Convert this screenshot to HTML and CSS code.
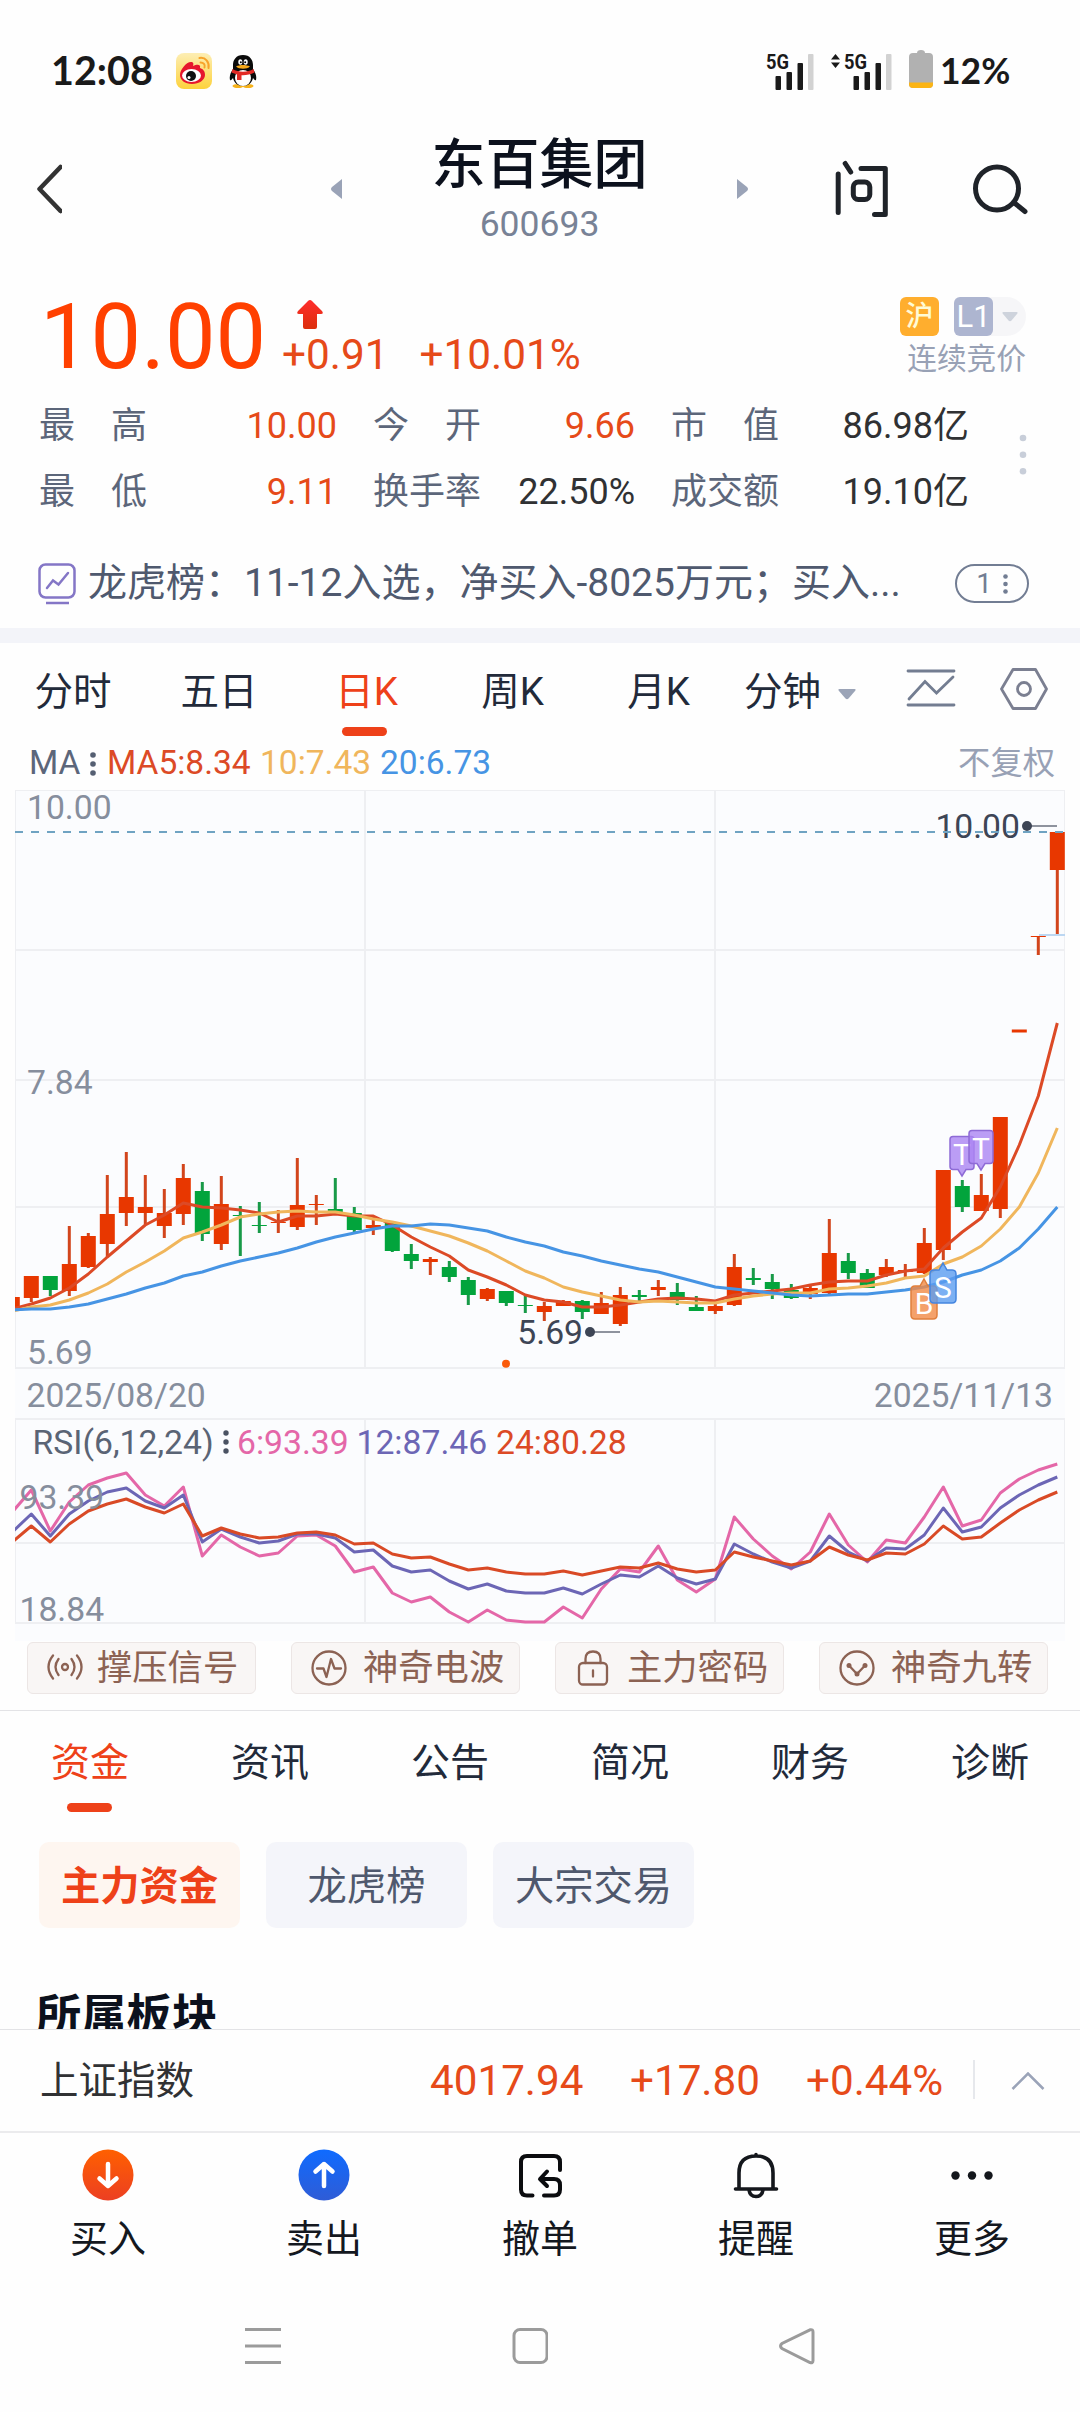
FILE: index.html
```html
<!DOCTYPE html>
<html lang="zh-CN">

<head>
    <meta charset="UTF-8">
    <meta name="viewport" content="width=device-width, initial-scale=1.0">
    <title>东百集团 600693</title>
    <link rel="stylesheet" href="styles.css">
</head>

<body>
    <!-- Status bar -->
    <div class="status-bar">
        <span class="clock">12:08</span>
        <svg class="app-weibo" width="36" height="36" viewBox="0 0 36 36">
            <defs>
                <linearGradient id="weibo-bg" x1="0" y1="0" x2="0" y2="1">
                    <stop offset="0" stop-color="#fdeeb4" />
                    <stop offset="1" stop-color="#fdd23c" />
                </linearGradient>
            </defs>
            <rect width="36" height="36" rx="8" fill="url(#weibo-bg)" />
            <path d="M4 22C4 17 10 9 15 9c2 0 3 1 2 4 4-2 8-2 7 2 3 1 5 3 5 7 0 5-6 9-13 9S4 27 4 22z" fill="#e6162d" />
            <ellipse cx="15.500" cy="22.500" rx="9.500" ry="6.500" fill="#fff" />
            <circle cx="15" cy="23" r="5" fill="#111" />
            <circle cx="13" cy="24.500" r="1.500" fill="#fff" />
            <path d="M23.500 5c6-1 10 4 9 10M24.500 9.500c3 0 5 2 4 5" fill="none" stroke="#f7a32a" stroke-width="2"
                stroke-linecap="round" />
        </svg>
        <svg class="app-qq" width="28" height="34" viewBox="0 0 28 34">
            <ellipse cx="9" cy="32" rx="5.500" ry="2" fill="#f6b21b" />
            <ellipse cx="19" cy="32" rx="5.500" ry="2" fill="#f6b21b" />
            <path d="M14 1C7 1 4 6 4 11v4c-2 3-4 7-3 11 1 1 2-1 3-2 1 5 5 8 10 8s9-3 10-8c1 1 2 3 3 2 1-4-1-8-3-11v-4C24 6 21 1 14 1z" fill="#0a0a0a" />
            <ellipse cx="14" cy="24" rx="8" ry="8" fill="#fff" />
            <ellipse cx="11.300" cy="8" rx="2" ry="2.800" fill="#fff" />
            <ellipse cx="16.700" cy="8" rx="2" ry="2.800" fill="#fff" />
            <circle cx="11.800" cy="8.300" r="1" />
            <circle cx="16.200" cy="8.300" r="1" />
            <path d="M7 12.500c4-2 10-2 14 0-3 3-11 3-14 0z" fill="#f6a81b" />
            <path d="M3.500 15c6 3.500 15 3.500 21 0l1 3.500c-4 2-9 3-13 2.700V26H8v-5.500l-5.500-2z" fill="#e32a25" />
        </svg>
        <svg class="signal" width="49" height="40" viewBox="0 0 49 40">
            <text class="net" x="0" y="17.500" textLength="23" lengthAdjust="spacingAndGlyphs">5G</text>
            <rect x="9.500" y="25" width="5.500" height="14" rx="1" />
            <rect x="20.500" y="21" width="5.500" height="18" rx="1" />
            <rect x="31.500" y="12" width="5.500" height="27" rx="1" />
            <rect x="42" y="3" width="5.500" height="36" rx="1" fill="#d2d2d2" />
        </svg>
        <svg class="signal second" width="63" height="40" viewBox="0 0 63 40">
            <path d="M1 8.500L5.500 3l4.500 5.500zM1 11.500h9L5.500 17z" />
            <text class="net" x="14" y="17.500" textLength="23" lengthAdjust="spacingAndGlyphs">5G</text>
            <rect x="23.500" y="25" width="5.500" height="14" rx="1" />
            <rect x="34.500" y="21" width="5.500" height="18" rx="1" />
            <rect x="45.500" y="12" width="5.500" height="27" rx="1" />
            <rect x="56" y="3" width="5.500" height="36" rx="1" fill="#d2d2d2" />
        </svg>
        <svg class="battery" width="24" height="38" viewBox="0 0 24 38">
            <path d="M8 3q0-3 4-3t4 3h4q4 0 4 4v27q0 4-4 4H4q-4 0-4-4V7q0-4 4-4z" fill="#b1b1b1" />
            <path d="M0 32.500h24V34q0 4-4 4H4q-4 0-4-4z" fill="#fbb414" />
        </svg>
        <span class="battery-text">12%</span>
    </div>

    <!-- Title bar -->
    <header class="header">
        <svg class="back" width="26" height="50" viewBox="0 0 26 50">
            <path d="M24.500 3L3.500 25l21 22" fill="none" stroke="#333" stroke-width="4.500" stroke-linecap="round"
                stroke-linejoin="round" />
        </svg>
        <svg class="prev" width="11" height="20" viewBox="0 0 11 20">
            <path d="M11 0v20L1 12q-2-2 0-4z" fill="#9aa3b7" />
        </svg>
        <div class="stock">
            <h1>东百集团</h1>
            <div class="code">600693</div>
        </div>
        <svg class="next" width="11" height="20" viewBox="0 0 11 20">
            <path d="M0 0v20l10-8q2-2 0-4z" fill="#9aa3b7" />
        </svg>
        <svg class="ask" width="54" height="58" viewBox="0 0 54 58">
            <g fill="none" stroke="#1f2329" stroke-width="5" stroke-linecap="round" stroke-linejoin="round">
                <path d="M3.200 14v38.500M10.200 3.500l5.500 8.500M26 8.500h24.300v46H39.500" />
                <rect x="18.300" y="22" width="16.500" height="17.500" rx="5" />
            </g>
        </svg>
        <svg class="search" width="58" height="58" viewBox="0 0 58 58">
            <g fill="none" stroke="#1f2329" stroke-width="5" stroke-linecap="round">
                <circle cx="26" cy="28.500" r="21.500" />
                <path d="M43.500 43L54 51.500" />
            </g>
        </svg>
    </header>

    <!-- Quote -->
    <section class="quote">
        <div class="price-row">
            <span class="price">10.00</span>
            <div class="change">
                <svg width="28" height="30" viewBox="0 0 28 30">
                    <defs>
                        <linearGradient id="up-arrow" x1="0" y1="0" x2="0" y2="1">
                            <stop offset="0" stop-color="#ff2d2d" />
                            <stop offset="1" stop-color="#dc2f0c" />
                        </linearGradient>
                    </defs>
                    <path d="M14 0q1 0 2 1l10 10q2 3-1 3h-4v13q0 2-2 2H9q-2 0-2-2V14H3q-3 0-1-3L12 1q1-1 2-1z"
                        fill="url(#up-arrow)" />
                </svg>
                <div class="change-values"><span>+0.91</span><span>+10.01%</span></div>
            </div>
            <div class="market">
                <div class="badges">
                    <span class="badge hu">沪</span>
                    <span class="level">
                        <span class="badge l1">L1</span>
                        <svg width="16" height="10" viewBox="0 0 16 10">
                            <path d="M1.500 0h13q2 0 .5 2L9.500 8.500q-1.500 1.500-3 0L1 2Q-.5 0 1.500 0z" fill="#ced3dc" />
                        </svg>
                    </span>
                </div>
                <div class="auction">连续竞价</div>
            </div>
        </div>
        <div class="stats-wrap">
            <div class="stats">
                <span class="label"><i>最</i><i>高</i></span><span class="value up">10.00</span>
                <span class="label"><i>今</i><i>开</i></span><span class="value up">9.66</span>
                <span class="label"><i>市</i><i>值</i></span><span class="value">86.98亿</span>
                <span class="label"><i>最</i><i>低</i></span><span class="value up">9.11</span>
                <span class="label">换手率</span><span class="value">22.50%</span>
                <span class="label">成交额</span><span class="value">19.10亿</span>
            </div>
            <svg class="more-dots" width="8" height="42" viewBox="0 0 8 42" fill="#c8ced9">
                <circle cx="4" cy="4" r="3.300" />
                <circle cx="4" cy="20.700" r="3.300" />
                <circle cx="4" cy="37.300" r="3.300" />
            </svg>
        </div>
        <div class="news">
            <svg width="38" height="42" viewBox="0 0 38 42" fill="none" stroke="#8476c6" stroke-width="2.500">
                <rect x="1.500" y="1.500" width="35" height="33" rx="6" />
                <path d="M9 25l6-7.500 5.500 4L30 10" stroke-linecap="round" />
                <path d="M8 40h23" />
            </svg>
            <span class="news-text">龙虎榜：11-12入选，净买入-8025万元；买入...</span>
            <span class="news-count">1
                <svg width="5" height="20" viewBox="0 0 5 20" fill="#727d93">
                    <circle cx="2.500" cy="2.500" r="2.300" />
                    <circle cx="2.500" cy="10" r="2.300" />
                    <circle cx="2.500" cy="17.500" r="2.300" />
                </svg>
            </span>
        </div>
    </section>

    <!-- Chart period tabs -->
    <nav class="periods">
        <span class="period">分时</span>
        <span class="period">五日</span>
        <span class="period active">日K</span>
        <span class="period">周K</span>
        <span class="period">月K</span>
        <span class="minutes">分钟
            <svg width="18" height="11" viewBox="0 0 18 11">
                <path d="M1.500 0h15q2 0 .5 2l-6.500 7.500q-1.500 1.500-3 0L1 2Q-.5 0 1.500 0z" fill="#9ba4b7" />
            </svg>
        </span>
        <svg class="tool-line" width="50" height="42" viewBox="0 0 50 42" fill="none" stroke="#737d91"
            stroke-width="2.800" stroke-linecap="round">
            <path d="M2 4h46M2 38h46M3 32l16-17.500L30.500 26 47 10" />
        </svg>
        <svg class="tool-hex" width="48" height="42" viewBox="0 0 48 42" fill="none" stroke="#7b7f91"
            stroke-width="2.800" stroke-linejoin="round">
            <path d="M13 1.500h22.500L46.500 21 35.500 40.500H13L1.500 21z" />
            <circle cx="24" cy="21" r="6.500" />
        </svg>
    </nav>
    <div class="ma-row">
        <span class="ma">MA</span>
        <svg width="6" height="24" viewBox="0 0 6 24" fill="#555f72">
            <circle cx="3" cy="3" r="2.800" />
            <circle cx="3" cy="12" r="2.800" />
            <circle cx="3" cy="21" r="2.800" />
        </svg>
        <span class="ma5">MA5:8.34</span>
        <span class="ma10">10:7.43</span>
        <span class="ma20">20:6.73</span>
        <span class="adjust">不复权</span>
    </div>

    <!-- K line and RSI chart -->
    <svg id="chart" class="chart" width="1050" height="851" viewBox="0 0 1050 851">
        <rect width="1050" height="851" fill="#fbfcfe" />
        <g class="grid">
            <path d="M0 .5h1050M.5 0v578M1049.500 0v578" stroke-width="1" />
            <path d="M0 160h1050M0 290h1050M0 417h1050M0 578h1050M350 0v578M700 0v578" />
            <path d="M0 629h1050M0 753h1050M0 833h1050M350 629v204M700 629v204" />
            <path d="M.5 629v204M1049.500 629v204" stroke-width="1" />
        </g>
        <path d="M1024 145h26" stroke="#bcd7f2" stroke-width="2" />
        <g class="axis">
            <text x="12" y="29">10.00</text>
            <text x="12" y="303.500">7.84</text>
            <text x="12" y="573.500">5.69</text>
            <text x="11.500" y="617">2025/08/20</text>
            <text x="1038" y="617" text-anchor="end">2025/11/13</text>
        </g>
        <g class="extreme">
            <text x="1005" y="48" text-anchor="end">10.00</text>
            <text x="568" y="553.500" text-anchor="end">5.69</text>
            <path d="M1012 36h30M575 542h30" stroke="#8e939e" stroke-width="2" />
            <circle cx="1012" cy="36" r="5" />
            <circle cx="575" cy="542" r="5" />
        </g>
        <circle cx="491" cy="573.700" r="4" fill="#fa5a0a" />
        <g id="candles"></g>
        <path d="M0 42h1050" stroke="#6fa3c2" stroke-width="2" stroke-dasharray="8 8" />
        <g id="averages"></g>

        <!-- buy / sell marks -->
        <g class="mark" fill="#ab85f2" stroke="#8e6bd6">
            <path d="M938 346.500h18q3 0 3 3v27q0 3-3 3h-5l-4 6.500-4-6.500h-5q-3 0-3-3v-27q0-3 3-3z" />
            <text x="947" y="375">T</text>
            <path d="M957 340.500h18q3 0 3 3v27q0 3-3 3h-5l-4 6.500-4-6.500h-5q-3 0-3-3v-27q0-3 3-3z" />
            <text x="966" y="369">T</text>
        </g>
        <g class="mark" fill="#f28a45" stroke="#e07f3c">
            <path d="M900 496h5l4-7 4 7h5q4 0 4 4v25q0 4-4 4h-18q-4 0-4-4v-25q0-4 4-4z" />
            <text x="909" y="524">B</text>
        </g>
        <g class="mark" fill="#5b9cf0" stroke="#4485e0">
            <path d="M919 480h5l4-7 4 7h5q4 0 4 4v25q0 4-4 4h-18q-4 0-4-4v-25q0-4 4-4z" />
            <text x="928" y="508">S</text>
        </g>

        <g class="rsi-title">
            <text x="17.500" y="664" fill="#5a6475">RSI(6,12,24)</text>
            <g fill="#4a5262">
                <circle cx="211" cy="643" r="2.700" />
                <circle cx="211" cy="652" r="2.700" />
                <circle cx="211" cy="661" r="2.700" />
            </g>
            <text x="222" y="664" fill="#e467a8">6:93.39</text>
            <text x="341.500" y="664" fill="#6c66b5">12:87.46</text>
            <text x="481" y="664" fill="#dc4a26">24:80.28</text>
        </g>
        <g id="rsi"></g>
        <g class="axis">
            <text x="4.500" y="719">93.39</text>
            <text x="4.500" y="831">18.84</text>
        </g>
    </svg>

    <!-- Signal shortcuts -->
    <div class="signals">
        <div class="signal-btn">
            <svg width="36" height="36" viewBox="0 0 36 36">
                <circle cx="18" cy="17" r="3" />
                <path d="M11.500 9q-6 8 0 16M24.500 9q6 8 0 16M6 5.500q-9 11.500 0 23M30 5.500q9 11.500 0 23" />
            </svg>
            撑压信号
        </div>
        <div class="signal-btn">
            <svg width="36" height="36" viewBox="0 0 36 36">
                <circle cx="18" cy="18" r="16.500" />
                <path d="M6 18.500h6.500l3 8.500 4.500-18 3.500 9.500H30" />
            </svg>
            神奇电波
        </div>
        <div class="signal-btn">
            <svg width="36" height="36" viewBox="0 0 36 36">
                <rect x="4" y="13" width="28" height="21.500" rx="4" />
                <path d="M10.500 13V9q0-7.500 7.500-7.500T25.500 9v4M18 20.500v6" />
            </svg>
            主力密码
        </div>
        <div class="signal-btn">
            <svg width="36" height="36" viewBox="0 0 36 36">
                <circle cx="18" cy="18" r="16.500" />
                <path d="M10 15.500l8 8.500 8-8.500" />
                <g fill="#8c6253" stroke="none">
                    <circle cx="10" cy="15.500" r="2.500" />
                    <circle cx="18" cy="24" r="2.500" />
                    <circle cx="26" cy="15.500" r="2.500" />
                </g>
            </svg>
            神奇九转
        </div>
    </div>

    <!-- Info tabs -->
    <nav class="info-tabs">
        <span class="active">资金</span>
        <span>资讯</span>
        <span>公告</span>
        <span>简况</span>
        <span>财务</span>
        <span>诊断</span>
    </nav>
    <div class="chips">
        <span class="chip active">主力资金</span>
        <span class="chip">龙虎榜</span>
        <span class="chip">大宗交易</span>
    </div>
    <div class="sector">
        <h2>所属板块</h2>
    </div>

    <!-- Index bar -->
    <div class="index-bar">
        <span class="index-name">上证指数</span>
        <span class="index-value">4017.94</span>
        <span class="index-diff">+17.80</span>
        <span class="index-pct">+0.44%</span>
        <span class="index-line"></span>
        <svg width="34" height="20" viewBox="0 0 34 20">
            <path d="M1.500 17L17 1.500 32.500 17" fill="none" stroke="#9aa3b8" stroke-width="2.500" />
        </svg>
    </div>

    <!-- Bottom actions -->
    <footer class="actions">
        <div class="action">
            <svg width="52" height="52" viewBox="0 0 52 52">
                <defs>
                    <linearGradient id="buy-bg" x1="0" y1="0" x2="0" y2="1">
                        <stop offset="0" stop-color="#ff6000" />
                        <stop offset="1" stop-color="#ec3f22" />
                    </linearGradient>
                </defs>
                <circle cx="26" cy="26" r="25.500" fill="url(#buy-bg)" />
                <path d="M26 15v22M17.500 29.500L26 37l8.500-7.500" fill="none" stroke="#fff" stroke-width="4.500"
                    stroke-linecap="round" stroke-linejoin="round" />
            </svg>
            买入
        </div>
        <div class="action">
            <svg width="52" height="52" viewBox="0 0 52 52">
                <defs>
                    <linearGradient id="sell-bg" x1="0" y1="0" x2="0" y2="1">
                        <stop offset="0" stop-color="#0f6bff" />
                        <stop offset="1" stop-color="#2f5cd6" />
                    </linearGradient>
                </defs>
                <circle cx="26" cy="26" r="25.500" fill="url(#sell-bg)" />
                <path d="M26 37V15M17.500 22.500L26 15l8.500 7.500" fill="none" stroke="#fff" stroke-width="4.500"
                    stroke-linecap="round" stroke-linejoin="round" />
            </svg>
            卖出
        </div>
        <div class="action">
            <svg width="52" height="52" viewBox="0 0 52 52">
                <g fill="none" stroke="#0b0c0f" stroke-width="4" stroke-linecap="round" stroke-linejoin="round">
                    <path d="M18.500 46.500H13q-6 0-6-6V13q0-6 6-6h27q6 0 6 6v8" />
                    <path d="M30 46.500h10q6 0 6-6V36q0-6-6-6H27M33 22.500L26 30l7 7" />
                </g>
            </svg>
            撤单
        </div>
        <div class="action">
            <svg width="52" height="52" viewBox="0 0 52 52">
                <g fill="none" stroke="#14171c" stroke-width="3.600" stroke-linecap="round" stroke-linejoin="round">
                    <path d="M5.500 40h41M9 40V24Q9 7 26 7t17 17v16M26 5.500V7M19 41q1 6.500 7 6.500t7-6.500" />
                </g>
            </svg>
            提醒
        </div>
        <div class="action">
            <svg width="52" height="52" viewBox="0 0 52 52" fill="#14171c">
                <circle cx="9.500" cy="26.500" r="4.200" />
                <circle cx="26" cy="26.500" r="4.200" />
                <circle cx="42.500" cy="26.500" r="4.200" />
            </svg>
            更多
        </div>
    </footer>

    <!-- System navigation -->
    <div class="system-nav">
        <svg width="36" height="38" viewBox="0 0 36 38">
            <path d="M0 2.500h36M0 19h36M0 35.500h36" />
        </svg>
        <svg width="36" height="38" viewBox="0 0 36 38">
            <rect x="2" y="2.500" width="33" height="33" rx="6" />
        </svg>
        <svg width="36" height="38" viewBox="0 0 36 38">
            <path d="M31 2.800L3 16.500Q0 19 3 21.500L31 35.500q3 1 3-2V5q0-3-3-2.200z" />
        </svg>
    </div>

    <script src="script.js"></script>
</body>

</html>
```

FILE: styles.css
```css
/* General */
:root {
    --red: #e64a19;
    --bright-red: #ee4119;
    --text: #222a3a;
    --sub: #5c667a;
    --muted: #98a1b5;
}

* {
    box-sizing: border-box;
}

body {
    width: 1080px;
    height: 2412px;
    margin: 0;
    overflow: hidden;
    background: #fefefe;
    color: var(--text);
    font-family: Roboto, "Noto Sans CJK SC", sans-serif;
    line-height: 1.2;
}

svg {
    display: block;
    flex: none;
}

h1,
h2 {
    margin: 0;
}

/* Status bar */
.status-bar {
    display: flex;
    align-items: center;
    height: 110px;
    padding: 32px 0 0 51px;
    font-family: Lato, sans-serif;
    font-weight: 700;
    color: #1a1a1a;
}

.clock {
    width: 125px;
    margin-top: -3px;
    font-size: 39.5px;
}

.app-qq {
    margin-left: 17px;
}

.signal {
    margin-left: 509px;
    fill: #1a1a1a;
}

.signal.second {
    margin-left: 15px;
}

.net {
    font-family: Roboto, sans-serif;
    font-size: 20.5px;
    font-weight: 700;
}

.battery {
    margin: -4px 7px 0 16px;
}

.battery-text {
    font-size: 35.5px;
}

/* Title bar */
.header {
    display: flex;
    align-items: center;
    height: 158px;
    padding-left: 36px;
}

.prev {
    margin-left: 269px;
}

.stock {
    width: 395px;
    padding-top: 4px;
    text-align: center;
}

.stock h1 {
    font-size: 54px;
    line-height: 60px;
    font-weight: 500;
    color: #0c111d;
}

.code {
    margin-top: 6px;
    font-size: 35.5px;
    line-height: 44px;
    color: #788296;
}

.ask {
    margin-left: 87px;
}

.search {
    margin-left: 82px;
}

/* Quote */
.quote {
    height: 375px;
    border-bottom: 15px solid #f3f4f9;
}

.price-row {
    display: flex;
    height: 125px;
    padding: 25px 54px 0 40px;
}

.price {
    width: 242px;
    font-size: 90px;
    line-height: 90px;
    color: #ff4000;
}

.change {
    padding-top: 7px;
    color: var(--red);
}

.change svg {
    margin-left: 14px;
}

.change-values {
    display: flex;
    gap: 31px;
    font-size: 42.3px;
    line-height: 50px;
}

.market {
    margin-left: auto;
    padding-top: 4px;
    text-align: right;
}

.badges {
    display: flex;
    justify-content: flex-end;
    background: linear-gradient(90deg, #fefefe 50%, #f6f6f8 50%);
    border-radius: 20px;
}

.badge {
    width: 39px;
    height: 39px;
    border-radius: 6px;
    font-size: 28px;
    line-height: 39px;
    text-align: center;
    color: #fff;
}

.hu {
    background: #ffae2e;
    color: #fffbd6;
    font-weight: 500;
}

.l1 {
    background: #adb5d0;
    font-size: 31px;
}

.level {
    display: flex;
    align-items: center;
    gap: 9px;
    padding: 0 8px 0 15px;
}

.auction {
    margin-top: 5px;
    font-size: 29.7px;
    line-height: 36px;
    color: var(--muted);
}

.stats-wrap {
    display: flex;
    align-items: flex-start;
    height: 132px;
    padding-left: 39px;
}

.stats {
    display: grid;
    grid-template-columns: 108px 190px 144px 154px 144px 190px;
    grid-auto-rows: 66px;
    width: 930px;
    font-size: 36px;
    line-height: 66px;
}

.label {
    display: flex;
    justify-content: space-between;
    justify-self: end;
    width: 108px;
    color: var(--sub);
    white-space: nowrap;
}

.label i {
    font-style: normal;
}

.value {
    text-align: right;
    color: #303133;
}

.value.up {
    color: var(--red);
}

.more-dots {
    margin: 41px 0 0 50px;
}

.news {
    display: flex;
    align-items: center;
    height: 103px;
    padding: 14px 0 0 38px;
    font-size: 39px;
    color: #4f596e;
}

.news-text {
    width: 828px;
    margin-left: 12px;
    white-space: nowrap;
}

.news-count {
    display: flex;
    align-items: center;
    justify-content: center;
    gap: 11px;
    width: 74px;
    height: 39px;
    margin-left: 39px;
    border: 2.5px solid #727d93;
    border-radius: 20px;
    font-size: 28px;
    color: #727d93;
}

/* Period tabs */
.periods {
    display: flex;
    align-items: center;
    height: 98px;
    font-size: 38.5px;
    line-height: 98px;
}

.period {
    position: relative;
    width: 146px;
    text-align: center;
}

.period:nth-child(n + 3) {
    padding-left: 3px;
}

.active {
    color: var(--bright-red);
}

.period.active::after,
.info-tabs .active::after {
    content: "";
    position: absolute;
    left: 50%;
    bottom: 5px;
    width: 45px;
    height: 9px;
    margin-left: -23px;
    border-radius: 5px;
    background: var(--bright-red);
}

.minutes {
    display: flex;
    align-items: center;
    gap: 17px;
    width: 176px;
    padding-left: 14px;
}

.minutes svg {
    margin-top: 4px;
}

.tool-line {
    margin-top: -8px;
}

.tool-hex {
    margin: -6px 0 0 44px;
}

.ma-row {
    display: flex;
    align-items: center;
    height: 49px;
    padding: 0 25px 4px 29px;
    font-size: 33.5px;
    color: var(--sub);
}

.ma {
    width: 61px;
}

.ma5 {
    width: 153px;
    margin-left: 11px;
    color: #dc4a26;
}

.ma10 {
    width: 120px;
    color: #f0b65c;
}

.ma20 {
    color: #4694e4;
}

.adjust {
    margin-left: auto;
    font-size: 32.3px;
    color: var(--muted);
}

/* Chart */
.chart {
    margin-left: 15px;
    font-size: 33.7px;
}

.grid {
    fill: none;
    stroke: #eeeff2;
    stroke-width: 2;
}

.axis {
    fill: #868e9d;
}

.extreme {
    fill: #3d4555;
}

.line {
    fill: none;
    stroke-width: 3;
    stroke-linejoin: round;
}

.mark path {
    fill-opacity: 0.8;
    stroke-width: 1.5;
}

.mark text {
    font-size: 30px;
    text-anchor: middle;
    fill: #fff;
    stroke: none;
}

/* Signal shortcuts */
.signals {
    display: flex;
    gap: 35px;
    height: 69px;
    padding: 1px 0 0 27px;
}

.signal-btn {
    display: flex;
    align-items: center;
    gap: 16px;
    width: 229px;
    height: 52px;
    padding-left: 19px;
    border: 1.5px solid #ece6e5;
    border-radius: 6px;
    background: #f9f6f5;
    font-size: 35.3px;
    line-height: 49px;
    color: #8c6253;
    white-space: nowrap;
}

.signal-btn:first-child {
    gap: 14px;
}

.signal-btn svg {
    fill: none;
    stroke: #8c6253;
    stroke-width: 2.3;
    stroke-linecap: round;
    stroke-linejoin: round;
}

/* Info tabs */
.info-tabs {
    display: flex;
    height: 106px;
    border-top: 1px solid #e3e3e6;
    font-size: 39px;
    line-height: 105px;
}

.info-tabs span {
    position: relative;
    width: 180px;
    text-align: center;
}

.info-tabs .active::after {
    bottom: 4px;
}

.chips {
    display: flex;
    gap: 26px;
    margin-top: 26px;
    padding-left: 39px;
}

.chip {
    width: 201px;
    height: 86px;
    border-radius: 10px;
    background: #f4f5fa;
    font-size: 39.3px;
    line-height: 91px;
    text-align: center;
    color: #4f586d;
}

.chip.active {
    background: #fef6f0;
    color: var(--bright-red);
    font-weight: 700;
}

.sector {
    height: 101px;
    padding: 62px 0 0 36px;
    overflow: hidden;
}

.sector h2 {
    font-size: 45.3px;
    line-height: 54px;
    color: #0c111d;
}

/* Index bar */
.index-bar {
    display: flex;
    align-items: center;
    height: 104px;
    padding: 2px 0 0 40px;
    border-top: 1px solid #e3e3e6;
    border-bottom: 2px solid #ebebed;
    font-size: 42.2px;
    color: var(--red);
}

.index-name {
    width: 390px;
    font-size: 38.5px;
    color: #303133;
}

.index-value {
    width: 200px;
}

.index-diff {
    width: 176px;
}

.index-pct {
    width: 168px;
}

.index-line {
    width: 2px;
    height: 39px;
    margin: -4px 36px 0 -1px;
    background: #e6e8ec;
}

/* Bottom actions */
.actions {
    display: flex;
    height: 149px;
    padding-top: 16px;
}

.action {
    display: flex;
    flex-direction: column;
    align-items: center;
    gap: 15px;
    width: 216px;
    font-size: 38px;
    line-height: 46px;
    color: #14181f;
}

/* System navigation */
.system-nav {
    display: flex;
    gap: 231px;
    padding: 45px 0 0 245px;
}

.system-nav svg {
    fill: none;
    stroke: #9b9b9b;
    stroke-width: 3;
}
```

FILE: script.js
```js
const SVG_NS = 'http://www.w3.org/2000/svg';
const STEP = 19;
const START = -2.7;
const BODY_WIDTH = 15;

// [up, high, low, body top, body bottom]
const candles = [
    [1, 507, 519, 507, 519], [1, 486, 512, 486, 508], [0, 486, 506, 486, 500], [1, 436, 506, 474, 501],
    [1, 443, 478, 446, 477], [1, 385, 467, 424, 454], [1, 362, 436, 407, 423], [1, 385, 434, 417, 423],
    [1, 399, 448, 423, 436], [1, 374, 435, 388, 424], [0, 392, 451, 401, 444], [1, 386, 460, 414, 454],
    [0, 416, 466, 425, 426], [0, 412, 443, 435, 436], [1, 420, 443, 432, 433], [1, 368, 440, 415, 437],
    [1, 405, 435, 414, 415], [0, 388, 423, 419, 423], [0, 417, 442, 423, 440], [1, 426, 445, 435, 438],
    [0, 433, 462, 433, 461], [0, 454, 479, 464, 471], [1, 467, 485, 469, 472], [0, 471, 492, 477, 487],
    [0, 487, 515, 490, 505], [1, 498, 511, 499, 509], [0, 501, 516, 501, 513], [0, 505, 523, 515, 516],
    [1, 512, 531, 516, 522], [1, 510, 516, 511, 516], [0, 510, 529, 511, 522], [1, 502, 524, 513, 524],
    [1, 497, 536, 505, 534], [0, 500, 511, 505, 507], [1, 490, 506, 497, 500], [0, 493, 515, 502, 510],
    [0, 506, 521, 517, 521], [1, 513, 524, 516, 521], [1, 464, 516, 477, 515], [0, 478, 495, 488, 490],
    [0, 484, 509, 492, 499], [0, 494, 509, 500, 508], [1, 496, 509, 498, 504], [1, 429, 504, 463, 503],
    [0, 463, 489, 471, 483], [0, 479, 498, 483, 498], [1, 469, 487, 477, 485], [1, 474, 487, 480, 482],
    [1, 438, 484, 453, 483], [1, 380, 470, 380, 460], [0, 390, 422, 396, 417], [1, 384, 421, 405, 421],
    [1, 327, 428, 327, 419], [1, 240, 242, 239.5, 242.5], [1, 146, 165, 146, 147], [1, 42, 144, 42, 80]
];

const ma5 = [519, 514, 508, 498, 484, 467, 451, 435, 425, 413, 417, 418, 420, 423, 432, 426, 426, 424, 426, 426,
    435, 447, 457, 466, 480, 487, 495, 505, 510, 512, 517, 517, 515, 512, 509, 508, 509, 511, 505, 503,
    501, 499, 495, 492, 491, 491, 485, 481, 479, 458, 442, 428, 397, 355, 306, 233];
const ma10 = [521, 517, 515, 510, 503, 494, 482, 472, 461, 448, 442, 435, 427, 424, 422, 421, 422, 422, 425, 429,
    432, 436, 441, 446, 453, 461, 471, 481, 488, 497, 502, 506, 510, 512, 511, 512, 513, 513, 509, 506,
    504, 503, 503, 499, 498, 496, 493, 488, 486, 474, 467, 456, 439, 417, 383, 338];
const ma20 = [520, 519, 519, 517, 514, 509, 504, 498, 493, 486, 482, 476, 471, 467, 463, 458, 452, 447, 443, 439,
    436, 436, 434, 435, 438, 441, 447, 452, 456, 462, 466, 471, 475, 479, 482, 487, 492, 497, 499, 501,
    503, 505, 506, 505, 504, 504, 502, 500, 497, 492, 485, 480, 471, 458, 439, 417];

const rsi6 = [722, 700, 741, 712, 695, 688, 683, 705, 716, 697, 766, 745, 757, 766, 763, 746, 745, 756, 782, 777,
    803, 812, 807, 822, 832, 820, 830, 832, 832, 817, 828, 799, 779, 782, 756, 790, 802, 789, 727, 749,
    766, 779, 762, 724, 755, 772, 750, 753, 727, 697, 736, 730, 703, 689, 680, 674];
const rsi12 = [742, 724, 746, 724, 711, 702, 698, 711, 718, 705, 752, 739, 747, 753, 751, 744, 744, 748, 762, 760,
    776, 782, 780, 791, 799, 794, 801, 803, 803, 798, 804, 794, 785, 787, 776, 788, 794, 789, 754, 764,
    772, 778, 771, 746, 762, 771, 758, 759, 745, 718, 742, 737, 718, 705, 695, 687];
const rsi24 = [752, 736, 752, 734, 721, 714, 709, 717, 723, 714, 746, 738, 744, 748, 747, 743, 742, 745, 754, 753,
    764, 768, 767, 774, 780, 778, 782, 784, 784, 781, 785, 781, 777, 778, 773, 779, 782, 780, 762, 767,
    771, 775, 771, 757, 765, 770, 763, 764, 754, 736, 749, 747, 733, 720, 710, 702];

function addRect(parent, x, y, width, height, color) {
    const rect = document.createElementNS(SVG_NS, 'rect');
    rect.setAttribute('x', x);
    rect.setAttribute('y', y);
    rect.setAttribute('width', width);
    rect.setAttribute('height', height);
    rect.setAttribute('fill', color);
    parent.appendChild(rect);
}

function drawCandles() {
    const group = document.getElementById('candles');
    candles.forEach(([up, high, low, top, bottom], i) => {
        const x = START + STEP * i;
        addRect(group, x - 1.5, high, 3, low - high, up ? '#d2451c' : '#189a48');
        addRect(group, x - BODY_WIDTH / 2, top, BODY_WIDTH, bottom - top, up ? '#e83700' : '#02a43c');
    });
}

function drawLine(groupId, values, color) {
    const line = document.createElementNS(SVG_NS, 'polyline');
    line.setAttribute('points', values.map((y, i) => `${(START + STEP * i).toFixed(1)},${y}`).join(' '));
    line.setAttribute('stroke', color);
    line.setAttribute('class', 'line');
    document.getElementById(groupId).appendChild(line);
}

drawCandles();
drawLine('averages', ma5, '#dc4a26');
drawLine('averages', ma10, '#f0b65c');
drawLine('averages', ma20, '#4694e4');
drawLine('rsi', rsi6, '#e467a8');
drawLine('rsi', rsi12, '#6c66b5');
drawLine('rsi', rsi24, '#d94a26');
```
